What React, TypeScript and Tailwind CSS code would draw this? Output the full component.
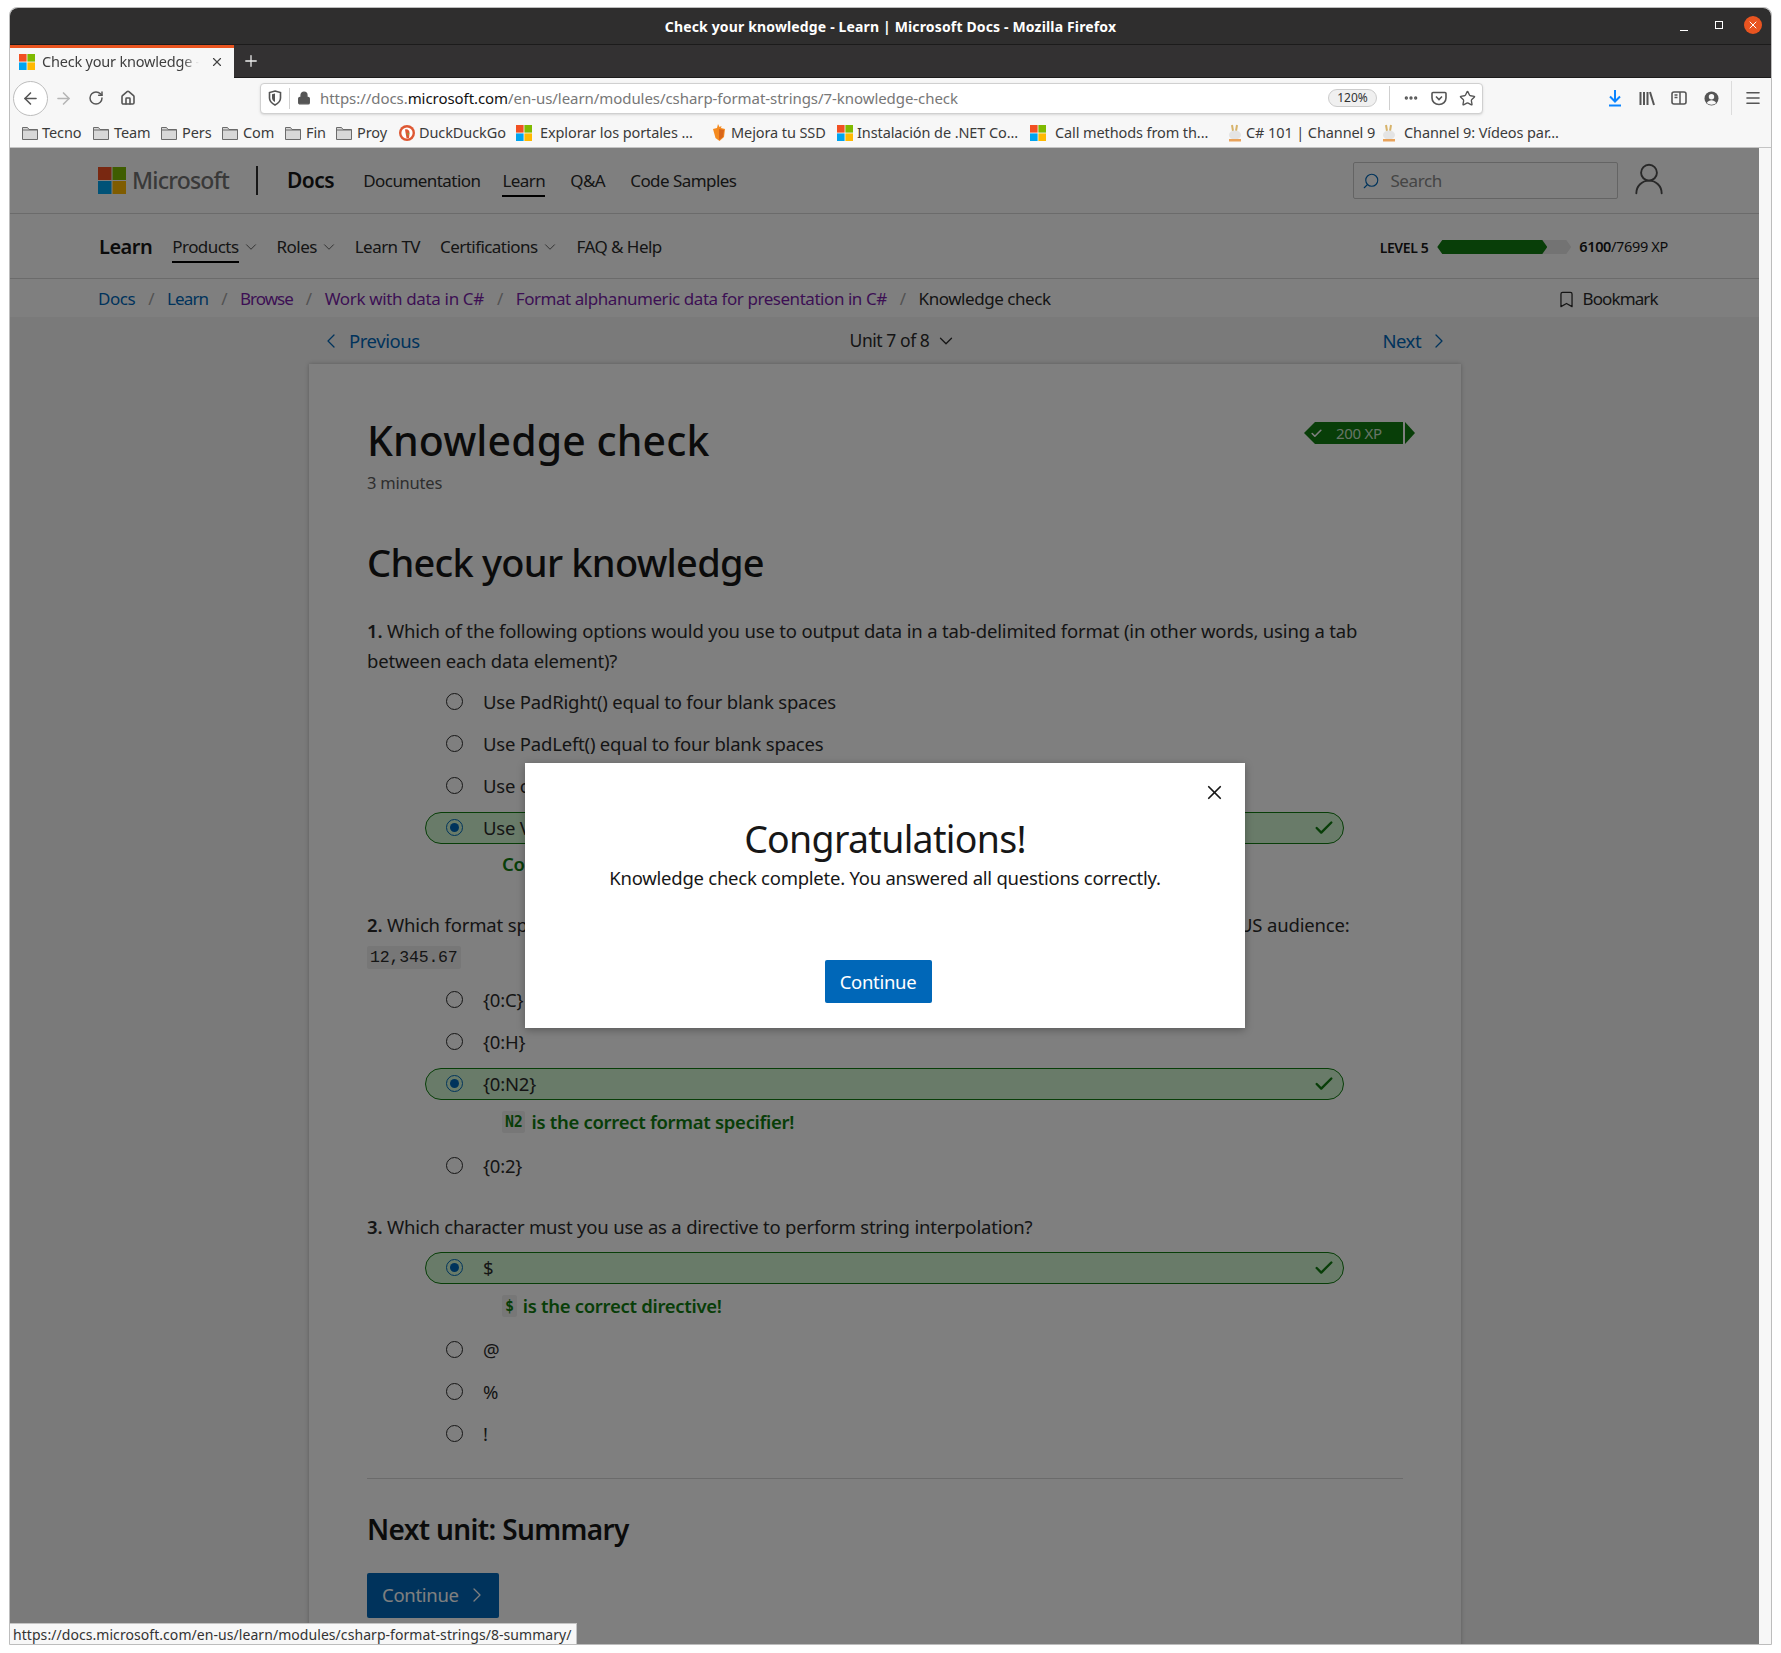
import { ReactNode } from "react";
import {
  ArrowLeft,
  ArrowRight,
  Bookmark,
  Check,
  ChevronDown,
  ChevronLeft,
  ChevronRight,
  Ellipsis,
  Home,
  Lock,
  Menu,
  Plus,
  RotateCw,
  Search,
  Star,
  UserRound,
  X,
} from "lucide-react";

const chromeFont = "font-['Noto_Sans',sans-serif]";

function MsLogo({ size = 16 }: { size?: number }) {
  return (
    <svg width={size} height={size} viewBox="0 0 16 16" className="shrink-0">
      <rect x="0" y="0" width="7.6" height="7.6" fill="#f25022" />
      <rect x="8.4" y="0" width="7.6" height="7.6" fill="#7fba00" />
      <rect x="0" y="8.4" width="7.6" height="7.6" fill="#00a4ef" />
      <rect x="8.4" y="8.4" width="7.6" height="7.6" fill="#ffb900" />
    </svg>
  );
}

function FolderIcon() {
  return (
    <svg width="16" height="14" viewBox="0 0 16 14" className="shrink-0">
      <path d="M.5 1.5h5l1.5 2h8.5v10H.5z" fill="#d8d8d8" stroke="#6b6b6b" />
      <path d="M.5 4h15" stroke="#6b6b6b" />
    </svg>
  );
}

function DuckIcon() {
  return (
    <svg width="16" height="16" viewBox="0 0 16 16" className="shrink-0">
      <circle cx="8" cy="8" r="8" fill="#de5833" />
      <circle cx="8" cy="8" r="5.6" fill="#fff" />
      <path d="M6 4.5c2.5-1 5 1 4.5 4L10 13H7.5L6.6 8z" fill="#de5833" />
      <path d="M7.5 8.5h3l-1 1.5z" fill="#65bc46" />
    </svg>
  );
}

function FoxIcon() {
  return (
    <svg width="16" height="17" viewBox="0 0 16 17" className="shrink-0">
      <path d="M2 5l4-1 1-4 1.5 3 2-1-.5 2 4 1-1 8-4.5 4-4-3z" fill="#f58a1f" />
      <path d="M8 5l5 1-1 7-4 3z" fill="#d9661a" />
    </svg>
  );
}

function BunnyIcon() {
  return (
    <svg width="16" height="18" viewBox="0 0 16 18" className="shrink-0">
      <path d="M5 1l1 6M10 1L9 7" stroke="#d7b36a" strokeWidth="2" />
      <ellipse cx="8" cy="11" rx="6" ry="4.5" fill="#e4e4e4" />
      <path d="M2 15h12v2.5H2z" fill="#e9a35b" />
    </svg>
  );
}

const bookmarks: { icon: ReactNode; label: string; left: number; width: number; gap: number }[] = [
  { icon: <FolderIcon />, label: "Tecno", left: 12, width: 40, gap: 4 },
  { icon: <FolderIcon />, label: "Team", left: 11, width: 36, gap: 5 },
  { icon: <FolderIcon />, label: "Pers", left: 11, width: 28, gap: 5 },
  { icon: <FolderIcon />, label: "Com", left: 12, width: 30, gap: 5 },
  { icon: <FolderIcon />, label: "Fin", left: 12, width: 20, gap: 5 },
  { icon: <FolderIcon />, label: "Proy", left: 10, width: 30, gap: 5 },
  { icon: <DuckIcon />, label: "DuckDuckGo", left: 12, width: 85, gap: 4 },
  { icon: <MsLogo />, label: "Explorar los portales ...", left: 12, width: 155, gap: 8 },
  { icon: <FoxIcon />, label: "Mejora tu SSD", left: 16, width: 93, gap: 4 },
  { icon: <MsLogo />, label: "Instalación de .NET Co...", left: 13, width: 161, gap: 4 },
  { icon: <MsLogo />, label: "Call methods from th...", left: 12, width: 155, gap: 9 },
  { icon: <BunnyIcon />, label: "C# 101 | Channel 9", left: 17, width: 123, gap: 3 },
  { icon: <BunnyIcon />, label: "Channel 9: Vídeos par...", left: 12, width: 158, gap: 7 },
];

function TitleBar() {
  return (
    <div className="relative h-[37px] shrink-0 flex items-center justify-center rounded-t-lg bg-[#2f2e2e] border-b border-[#1c1b1b]">
      <span className={`${chromeFont} text-[14px] font-bold tracking-[0.15px] text-white`}>
        Check your knowledge - Learn | Microsoft Docs - Mozilla Firefox
      </span>
      <div className="absolute right-[9px] top-[8px] flex items-center">
        <div className="w-[8px] h-[1px] bg-white mr-[27px] mt-[10px]" />
        <div className="w-[8px] h-[8px] border border-white mr-[21px]" />
        <div className="w-[18px] h-[18px] rounded-full bg-[#e95420] flex items-center justify-center">
          <X size={12} strokeWidth={2} className="text-white" />
        </div>
      </div>
    </div>
  );
}

function TabBar() {
  return (
    <div className="h-[33px] shrink-0 flex bg-[#333132] border-b border-[#1c1b1b]">
      <div className={`${chromeFont} w-[224px] h-[33px] flex items-center bg-[#f7f7f7] border-t-[3px] border-[#e95420] pl-[9px] pb-[3px]`}>
        <MsLogo />
        <span className="ml-[7px] w-[157px] overflow-hidden whitespace-nowrap text-[14.5px] tracking-[-0.2px] text-[#3f3f3f] [mask-image:linear-gradient(to_right,black_90%,transparent)]">
          Check your knowledge - Learn
        </span>
        <X size={14} className="ml-[11px] text-[#444]" />
      </div>
      <Plus size={18} strokeWidth={1.7} className="ml-[8px] mt-[7px] text-[#eee]" />
    </div>
  );
}

function Toolbar() {
  return (
    <div className={`${chromeFont} h-[40px] shrink-0 flex items-center bg-[#f7f7f7] text-[#555]`}>
      <div className="ml-[3px] w-[35px] h-[35px] rounded-full border border-[#bdbdbd] bg-white flex items-center justify-center">
        <ArrowLeft size={19} strokeWidth={2} />
      </div>
      <ArrowRight size={19} strokeWidth={2} className="ml-[6px] text-[#b5b5b5]" />
      <RotateCw size={16} strokeWidth={2.2} className="ml-[15px]" />
      <Home size={16} strokeWidth={2.4} className="ml-[16px]" />
      <div className="ml-[124px] w-[1223px] h-[31px] flex items-center rounded-[4px] border border-[#d0d0d0] bg-white shadow-sm">
        <svg width="14" height="16" viewBox="0 0 14 16" className="ml-[7px]">
          <path d="M7 1l5.5 1.5V8c0 3-2.5 5.5-5.5 7C4 13.5 1.5 11 1.5 8V2.5z" fill="none" stroke="#555" strokeWidth="1.6" />
          <path d="M7 3.5V12C5 11 4 9.5 4 8V4.3z" fill="#555" />
        </svg>
        <div className="ml-[7px] w-px h-[21px] bg-[#d0d0d0]" />
        <Lock size={14} strokeWidth={2.4} fill="#555" className="ml-[7px]" />
        <span className="ml-[9px] text-[15px] tracking-[-0.06px] text-[#777] whitespace-nowrap">
          https://docs.<span className="text-[#111]">microsoft.com</span>/en-us/learn/modules/csharp-format-strings/7-knowledge-check
        </span>
        <div className="ml-auto flex items-center">
          <div className="w-[49px] h-[18px] rounded-full border border-[#ccc] bg-[#f0f0f0] flex items-center justify-center text-[12px] text-[#333]">
            120%
          </div>
          <div className="ml-[12px] w-px h-[24px] bg-[#cfcfcf]" />
          <Ellipsis size={16} strokeWidth={3} className="ml-[13px]" />
          <svg width="16" height="15" viewBox="0 0 16 15" className="ml-[12px]">
            <path d="M2 1.5h12c.5 0 1 .5 1 1V7c0 3.500-3 6.500-7 6.500S1 10.500 1 7V2.500c0-.5.5-1 1-1z" fill="none" stroke="#555" strokeWidth="1.6" />
            <path d="M5 5.500l3 3 3-3" fill="none" stroke="#555" strokeWidth="1.6" />
          </svg>
          <Star size={17} strokeWidth={1.9} className="ml-[12px] mr-[6px]" />
        </div>
      </div>
      <svg width="16" height="18" viewBox="0 0 16 18" className="ml-[124px]">
        <path d="M8 1v11M3 7.500L8 12.500l5-5" fill="none" stroke="#0a84ff" strokeWidth="2" />
        <path d="M2 16.500h12" stroke="#0a84ff" strokeWidth="2" />
      </svg>
      <svg width="16" height="15" viewBox="0 0 16 15" className="ml-[16px]">
        <path d="M1.500 1v13M5 1v13M8.500 1v13M11 1l4 13" stroke="#555" strokeWidth="2" fill="none" />
      </svg>
      <svg width="16" height="14" viewBox="0 0 16 14" className="ml-[16px]">
        <rect x="1" y="1" width="14" height="12" rx="2" fill="none" stroke="#555" strokeWidth="1.600" />
        <path d="M9 1v12M3.500 4h3M3.500 6.500h3" stroke="#555" strokeWidth="1.500" />
      </svg>
      <svg width="15" height="15" viewBox="0 0 15 15" className="ml-[17px]">
        <circle cx="7.500" cy="7.500" r="7" fill="#555" />
        <circle cx="7.500" cy="5.800" r="2.700" fill="#f7f7f7" />
        <path d="M2.800 12c1-2 3-2.800 4.700-2.800s3.700.8 4.700 2.800c-1.300 1-3 1.700-4.700 1.700s-3.400-.7-4.700-1.700z" fill="#f7f7f7" />
      </svg>
      <div className="ml-[12px] w-px h-[34px] bg-[#dcdcdc]" />
      <Menu size={18} strokeWidth={2.2} className="ml-[12px]" />
    </div>
  );
}

function BookmarksBar() {
  return (
    <div className={`${chromeFont} h-[30px] shrink-0 flex items-center bg-[#f7f7f7] border-b border-[#c4c4c4]`}>
      {bookmarks.map((b) => (
        <div key={b.label} className="flex items-center" style={{ marginLeft: b.left }}>
          {b.icon}
          <span
            className="text-[14.5px] tracking-[-0.1px] text-[#3b3b3b] whitespace-nowrap"
            style={{ marginLeft: b.gap, width: b.width }}
          >
            {b.label}
          </span>
        </div>
      ))}
    </div>
  );
}

function NavItem({ label, active, caret, left }: { label: string; active?: boolean; caret?: boolean; left: string }) {
  return (
    <div className={`${left} flex items-center`}>
      <span className={`relative text-[17px] tracking-[-0.55px] text-[#2b2b2b] ${active ? "after:absolute after:left-0 after:right-0 after:bottom-[-3px] after:h-[2px] after:bg-black" : ""}`}>
        {label}
      </span>
      {caret && <ChevronDown size={18} strokeWidth={1.1} className="ml-[3px] -mr-[2px] text-[#444]" />}
    </div>
  );
}

function PageHeader() {
  return (
    <>
      <div className="h-[66px] shrink-0 flex items-center bg-white border-b border-[#d6d6d6] pl-[88px]">
        <svg width="28" height="27" viewBox="0 0 28 27" className="shrink-0">
          <rect width="13.500" height="13" fill="#f25022" />
          <rect x="14.500" width="13.500" height="13" fill="#7fba00" />
          <rect y="14" width="13.500" height="13" fill="#00a4ef" />
          <rect x="14.500" y="14" width="13.500" height="13" fill="#ffb900" />
        </svg>
        <span className="ml-[6px] text-[23px] font-medium tracking-[-0.8px] text-[#737373]">Microsoft</span>
        <div className="ml-[27px] w-[2px] h-[29px] bg-[#2f2f2f]" />
        <span className="ml-[29px] text-[21px] font-semibold tracking-[-0.5px] text-[#171717]">Docs</span>
        <NavItem label="Documentation" left="ml-[29px]" />
        <span className="ml-[22px] relative text-[17px] tracking-[-0.55px] text-[#2b2b2b] after:absolute after:left-0 after:right-0 after:bottom-[-4px] after:h-[2px] after:bg-black">Learn</span>
        <NavItem label="Q&A" left="ml-[25px]" />
        <NavItem label="Code Samples" left="ml-[25px]" />
        <div className="ml-[617px] w-[265px] h-[37px] flex items-center border border-[#c8c8c8] rounded-[2px]">
          <Search size={18} strokeWidth={1.500} className="ml-[8px] text-[#0067b8] -scale-x-100" />
          <span className="ml-[10px] text-[17px] tracking-[-0.4px] text-[#8a8a8a]">Search</span>
        </div>
        <UserRound size={38} strokeWidth={1.200} className="ml-[12px] -mt-[4px] text-[#505050]" />
      </div>
      <div className="h-[65px] shrink-0 flex items-center bg-white border-b border-[#d6d6d6] pl-[89px] pt-[2px]">
        <span className="text-[20px] font-semibold tracking-[-0.5px] text-[#171717]">Learn</span>
        <NavItem label="Products" active caret left="ml-[20px]" />
        <NavItem label="Roles" caret left="ml-[19px]" />
        <NavItem label="Learn TV" left="ml-[19px]" />
        <NavItem label="Certifications" caret left="ml-[20px]" />
        <NavItem label="FAQ & Help" left="ml-[20px]" />
        <span className="ml-[718px] text-[14px] font-semibold tracking-[-0.4px] text-[#171717]">LEVEL 5</span>
        <div className="ml-[9px] relative w-[134px] h-[14px]">
          <div className="absolute inset-0 bg-[#e6e6e6] [clip-path:polygon(5px_0,calc(100%-5px)_0,100%_50%,calc(100%-5px)_100%,5px_100%,0_50%)]" />
          <div className="absolute inset-y-0 left-0 w-[110px] bg-[#107c10] [clip-path:polygon(5px_0,calc(100%-5px)_0,100%_50%,calc(100%-5px)_100%,5px_100%,0_50%)]" />
        </div>
        <span className="ml-[8px] text-[14.500px] tracking-[-0.35px] text-[#171717]">
          <span className="font-semibold">6100</span>/7699 XP
        </span>
      </div>
    </>
  );
}

const crumbs = [
  { label: "Docs", style: "text-[#0067b8]" },
  { label: "Learn", style: "text-[#0067b8] tracking-[-0.9px]" },
  { label: "Browse", style: "text-[#7a1fa8] tracking-[-1px]" },
  { label: "Work with data in C#", style: "text-[#7a1fa8] tracking-[-0.35px]" },
  { label: "Format alphanumeric data for presentation in C#", style: "text-[#7a1fa8]" },
];

function Breadcrumb() {
  return (
    <div className="h-[38px] shrink-0 flex items-center bg-white pl-[88px] pt-[2px] text-[17px] tracking-[-0.45px]">
      {crumbs.map((c) => (
        <div key={c.label} className="flex items-center">
          <span className={c.style}>{c.label}</span>
          <span className="mx-[13px] text-[#a5a5a5]">/</span>
        </div>
      ))}
      <span className="text-[#2b2b2b]">Knowledge check</span>
      <Bookmark size={19} strokeWidth={1.600} className="ml-[506px] text-[#2b2b2b]" />
      <span className="ml-[7px] tracking-[-0.9px] text-[#2b2b2b]">Bookmark</span>
    </div>
  );
}

function UnitRow() {
  return (
    <div className="h-[47px] shrink-0 flex items-center pl-[309px] text-[18.500px] tracking-[-0.45px]">
      <ChevronLeft size={24} strokeWidth={1.300} className="text-[#0067b8]" />
      <span className="ml-[6px] text-[#0067b8]">Previous</span>
      <span className="ml-[430px] text-[17.500px] text-[#2b2b2b]">Unit 7 of 8</span>
      <ChevronDown size={22} strokeWidth={1.400} className="ml-[6px] text-[#2b2b2b]" />
      <span className="ml-[425px] text-[#0067b8]">Next</span>
      <ChevronRight size={24} strokeWidth={1.300} className="ml-[6px] text-[#0067b8]" />
    </div>
  );
}

function Option({ label, picked, note }: { label: string; picked?: boolean; note?: ReactNode }) {
  return (
    <>
      <div
        className={`mt-[10px] w-[919px] h-[32px] flex items-center rounded-full border pl-[20px] ${
          picked ? "border-[#107c10] bg-[#d2f7d2]" : "border-transparent"
        }`}
      >
        <div className={`w-[17px] h-[17px] rounded-full border-[1.5px] flex items-center justify-center ${picked ? "border-[#0067b8]" : "border-[#2b2b2b]"}`}>
          {picked && <div className="w-[9px] h-[9px] rounded-full bg-[#0067b8]" />}
        </div>
        <span className="ml-[20px] text-[18.500px] tracking-[-0.2px] text-[#2b2b2b]">{label}</span>
        {picked && <Check size={22} strokeWidth={2.600} className="ml-auto mr-[8px] text-[#107c10]" />}
      </div>
      {note && (
        <div
          className={`h-[32px] pb-[4px] pl-[77px] flex items-center text-[18.500px] font-semibold tracking-[-0.3px] text-[#107c10] ${
            typeof note === "string" ? "mt-[6px]" : "mt-[8px]"
          }`}
        >
          {note}
        </div>
      )}
    </>
  );
}

function NoteCode({ children }: { children: string }) {
  return (
    <code className="mr-[6px] h-[22px] px-[3px] flex items-center rounded-[2px] bg-[#efefef] font-['DejaVu_Sans_Mono',monospace] text-[15px] font-bold">
      {children}
    </code>
  );
}

function Card() {
  return (
    <div className="ml-[299px] w-[1152px] shrink-0 bg-white shadow-[0_0_4px_rgba(0,0,0,0.25)] pl-[58px] pr-[58px] pb-[60px] text-[#2b2b2b]">
      <div className="relative">
        <h1 className="pt-[46px] text-[41px] leading-[60px] font-medium tracking-[0.1px] text-[#171717]">Knowledge check</h1>
        <div className="absolute right-[-12px] top-[58px] flex items-center">
          <div className="w-[99px] h-[22px] flex items-center bg-[#107c10] text-[15px] tracking-[-0.3px] text-[#cfe8cf] [clip-path:polygon(11px_0,100%_0,100%_100%,11px_100%,0_50%)]">
            <Check size={13} strokeWidth={3} className="ml-[6px] text-white" />
            <span className="ml-[13px]">200 XP</span>
          </div>
          <div className="ml-[2px] w-[10px] h-[22px] bg-[#107c10] [clip-path:polygon(0_0,100%_50%,0_100%)]" />
        </div>
      </div>
      <div className="mt-[1px] text-[16.500px] tracking-[-0.2px] text-[#5c5c5c]">3 minutes</div>
      <h2 className="mt-[38px] text-[38px] leading-[56px] font-medium tracking-[-0.75px] text-[#171717]">Check your knowledge</h2>
      <p className="mt-[26px] max-w-[1000px] text-[18.500px] leading-[30px] tracking-[-0.17px]">
        <b className="font-semibold">1.</b> Which of the following options would you use to output data in a tab-delimited format (in other words, using a tab between each data element)?
      </p>
      <div className="ml-[58px] mt-[3px]">
        <Option label="Use PadRight() equal to four blank spaces" />
        <Option label="Use PadLeft() equal to four blank spaces" />
        <Option label="Use concatenation" />
        <Option label="Use Verbatim" picked note="Correct!" />
      </div>
      <p className="mt-[28px] max-w-[1000px] text-[18.500px] leading-[30px] tracking-[-0.17px]">
        <b className="font-semibold">2.</b> Which format specifier would you use to show a number with two decimal places and commas for a US audience:
        <br />
        <code className="px-[3px] py-[2px] rounded-[2px] bg-[#efefef] font-['Liberation_Mono',monospace] text-[16.500px]">12,345.67</code>
      </p>
      <div className="ml-[58px] mt-[11px]">
        <Option label="{0:C}" />
        <Option label="{0:H}" />
        <Option label="{0:N2}" picked note={<><NoteCode>N2</NoteCode>is the correct format specifier!</>} />
        <Option label="{0:2}" />
      </div>
      <p className="mt-[30px] max-w-[1000px] text-[18.500px] leading-[30px] tracking-[-0.2px]">
        <b className="font-semibold">3.</b> Which character must you use as a directive to perform string interpolation?
      </p>
      <div className="ml-[58px]">
        <Option label="$" picked note={<><NoteCode>$</NoteCode>is the correct directive!</>} />
        <Option label="@" />
        <Option label="%" />
        <Option label="!" />
      </div>
      <div className="mt-[28px] h-px bg-[#d6d6d6]" />
      <h2 className="mt-[29px] text-[28px] leading-[42px] font-semibold tracking-[-0.65px] text-[#171717]">Next unit: Summary</h2>
      <div className="mt-[23px] w-[132px] h-[45px] flex items-center rounded-[2px] bg-[#0067b8] pl-[15px] text-[18.500px] tracking-[-0.3px] text-white">
        Continue
        <ChevronRight size={24} strokeWidth={1.300} className="ml-[6px]" />
      </div>
    </div>
  );
}

function Dialog() {
  return (
    <div className="absolute left-[515px] top-[615px] w-[720px] h-[265px] flex flex-col items-center bg-white shadow-[0_2px_8px_rgba(0,0,0,0.3)] text-[#171717]">
      <X size={23} strokeWidth={1.800} className="absolute right-[19px] top-[18px]" />
      <div className="mt-[48px] text-[37.500px] leading-[56px] tracking-[-0.7px]">Congratulations!</div>
      <div className="mt-[-2px] text-[18.500px] leading-[26px] tracking-[-0.25px]">
        Knowledge check complete. You answered all questions correctly.
      </div>
      <div className="mt-[69px] mr-[14px] w-[107px] h-[43px] flex items-center justify-center rounded-[2px] bg-[#0067b8] text-[18.500px] tracking-[-0.3px] text-white">
        Continue
      </div>
    </div>
  );
}

export default function App() {
  return (
    <div className="w-[1781px] h-[1653px] overflow-hidden bg-white pt-[7px] pl-[9px]">
      <div className="w-[1763px] h-[1638px] flex flex-col rounded-t-lg border border-[#bdbdbd] bg-[#f7f7f7]">
        <TitleBar />
        <TabBar />
        <Toolbar />
        <BookmarksBar />
        <div className="flex-1 min-h-0 flex">
          <div className="relative w-[1749px] overflow-hidden flex flex-col bg-[#f4f4f4] font-['Noto_Sans',sans-serif]">
            <PageHeader />
            <Breadcrumb />
            <UnitRow />
            <Card />
            <div className="absolute inset-0 bg-black/50" />
            <Dialog />
            <div className={`${chromeFont} absolute left-0 bottom-0 w-[567px] h-[21px] flex items-center whitespace-nowrap bg-[#f7f7f7] border-t border-r border-[#c4c4c4] pl-[3px] text-[14px] tracking-[0.06px] text-[#333]`}>
              https://docs.microsoft.com/en-us/learn/modules/csharp-format-strings/8-summary/
            </div>
          </div>
        </div>
      </div>
    </div>
  );
}
